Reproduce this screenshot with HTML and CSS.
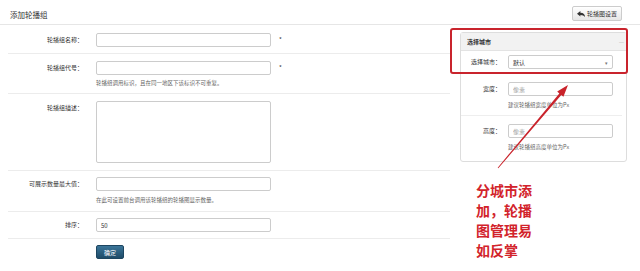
FILE: index.html
```html
<!DOCTYPE html>
<html>
<head>
    <meta charset="UTF-8">
    <title>添加轮播组</title>
    <link rel="stylesheet" href="styles.css">
</head>
<body>
    <div class="page-header">
        <h2 class="title">添加轮播组</h2>
        <button class="btn-back">
            <svg width="8" height="6" viewBox="0 0 8 6"><path d="M0 2.8 L3.4 0 V1.8 C6.6 1.8 8 3.6 8 6 C7 4.6 5.6 3.9 3.4 3.9 V5.6 Z" fill="#333"/></svg>
            轮播图设置
        </button>
    </div>

    <div class="main">
        <div class="form">
            <div class="row row-1">
                <label>轮播组名称：</label>
                <div class="field">
                    <div class="line"><input type="text"><span class="req">*</span></div>
                </div>
            </div>
            <div class="row row-2">
                <label>轮播组代号：</label>
                <div class="field">
                    <div class="line"><input type="text"><span class="req">*</span></div>
                    <p class="help">轮播组调用标识，且在同一地区下该标识不可重复。</p>
                </div>
            </div>
            <div class="row row-3">
                <label>轮播组描述：</label>
                <div class="field">
                    <textarea></textarea>
                </div>
            </div>
            <div class="row row-4">
                <label>可展示数量最大值：</label>
                <div class="field">
                    <input type="text">
                    <p class="help">在此可设置前台调用该轮播组的轮播图显示数量。</p>
                </div>
            </div>
            <div class="row row-5">
                <label>排序：</label>
                <div class="field">
                    <input type="text" value="50">
                </div>
            </div>
            <div class="actions">
                <button class="btn-primary">确定</button>
            </div>
        </div>

        <div class="side">
            <div class="panel">
                <div class="panel-head">
                    <span>选择城市</span>
                    <span class="collapse">—</span>
                </div>
                <div class="p-row city-row">
                    <label>选择城市：</label>
                    <div class="select"><span>默认</span><span class="caret">▾</span></div>
                </div>
                <div class="p-row size-row">
                    <label>宽度：</label>
                    <div class="field">
                        <input type="text" placeholder="像素">
                        <p class="help">建议轮播组宽度单位为Px</p>
                    </div>
                </div>
                <div class="p-row size-row last">
                    <label>高度：</label>
                    <div class="field">
                        <input type="text" placeholder="像素">
                        <p class="help">建议轮播组高度单位为Px</p>
                    </div>
                </div>
            </div>
            <div class="note">分城市添<br>加，轮播<br>图管理易<br>如反掌</div>
        </div>
    </div>

    <!-- 标注 -->
    <div class="mark-box"></div>
    <svg class="mark-arrow" width="640" height="271" viewBox="0 0 640 271">
        <polygon points="568,85 563.4,96.8 561.3,95 498.3,168.3 497.7,167.7 559.3,93.4 557.2,91.6" fill="#c9232b"/>
    </svg>
</body>
</html>
```

FILE: styles.css
```css
body {
    margin: 0;
    position: relative;
    width: 640px;
    height: 271px;
    overflow: hidden;
    background: #fff;
    font-family: "Noto Sans CJK SC", sans-serif;
    color: #333;
}
.page-header {
    display: flex;
    justify-content: space-between;
    align-items: flex-start;
    height: 24px;
    padding: 0 18px 0 10px;
    border-bottom: 1px solid #e6e6e6;
}
.title {
    margin: 0;
    padding-top: 10px;
    font-size: 7.5px;
    line-height: 10px;
    font-weight: normal;
    color: #333;
}
.btn-back {
    margin-top: 6px;
    height: 15px;
    padding: 0 4px;
    display: flex;
    align-items: center;
    gap: 2px;
    font-family: inherit;
    font-size: 6px;
    color: #333;
    border: 1px solid #ccc;
    border-radius: 2px;
    background: linear-gradient(#fff, #e6e6e6);
}
.main {
    display: flex;
    align-items: flex-start;
}
.form {
    width: 442px;
    margin-left: 8px;
}
.row {
    display: flex;
    border-bottom: 1px solid #ececec;
}
.row label {
    width: 75px;
    text-align: right;
    font-size: 6px;
    line-height: 14px;
}
.field {
    margin-left: 13px;
}
.line {
    display: flex;
    align-items: center;
}
.req {
    margin-left: 8px;
    font-size: 6px;
    line-height: 14px;
}
input, textarea {
    display: block;
    box-sizing: border-box;
    height: 14px;
    width: 175px;
    padding: 0 4px;
    border: 1px solid #ccc;
    border-radius: 2px;
    font-family: inherit;
    font-size: 6px;
    color: #333;
    background: #fff;
}
input::placeholder {
    color: #aaa;
}
textarea {
    height: 62px;
    resize: none;
}
.help {
    margin: 4px 0 0;
    font-size: 5.5px;
    line-height: 8px;
    color: #666;
}
.row-1 { padding: 8px 0 6px; }
.row-2 { padding: 7px 0 6px; }
.row-3 { padding: 7px 0 7px; }
.row-4 { padding: 6px 0 7px; }
.row-4 .help { margin-top: 5px; }
.row-5 { padding: 6px 0 6px; }
.actions {
    display: flex;
    padding: 6px 0 0 88px;
}
.btn-primary {
    height: 14px;
    padding: 0 7px;
    font-family: inherit;
    font-size: 6px;
    color: #fff;
    border: 1px solid #1d4560;
    border-radius: 2px;
    background: linear-gradient(#3b7599, #1f4b68);
}
.side {
    width: 167px;
    margin-left: 10px;
}
.panel {
    margin-top: 7px;
    border: 1px solid #ddd;
    border-radius: 3px;
}
.panel-head {
    display: flex;
    justify-content: space-between;
    align-items: center;
    height: 17px;
    padding: 0 2px 0 6px;
    background: #f2f2f2;
    border-bottom: 1px solid #e3e3e3;
    font-size: 6px;
    font-weight: bold;
}
.collapse {
    font-weight: normal;
    color: #bbb;
}
.p-row {
    display: flex;
}
.p-row label {
    width: 40px;
    text-align: right;
    font-size: 6px;
    line-height: 14px;
}
.p-row .field {
    margin-left: 7px;
}
.p-row input {
    width: 105px;
}
.p-row .help {
    margin-top: 5px;
}
.city-row {
    padding: 4px 0 5px;
}
.select {
    margin-left: 7px;
    box-sizing: border-box;
    width: 105px;
    height: 14px;
    padding: 0 4px;
    display: flex;
    justify-content: space-between;
    align-items: center;
    border: 1px solid #ccc;
    border-radius: 2px;
    font-size: 6px;
}
.caret {
    color: #777;
    font-size: 5px;
}
.size-row {
    padding: 8px 0 6px;
    margin: 0 4px 0 0;
    border-bottom: 1px solid #eee;
}
.size-row.last {
    padding-bottom: 10px;
    border-bottom: none;
}
.note {
    margin-top: 18px;
    padding-left: 16px;
    font-size: 14px;
    line-height: 20px;
    font-weight: bold;
    color: #d2232b;
}
.mark-box {
    position: absolute;
    left: 450px;
    top: 28px;
    width: 174px;
    height: 42px;
    border: 2px solid #c9242d;
    border-radius: 3px;
}
.mark-arrow {
    position: absolute;
    left: 0;
    top: 0;
    pointer-events: none;
}
```
